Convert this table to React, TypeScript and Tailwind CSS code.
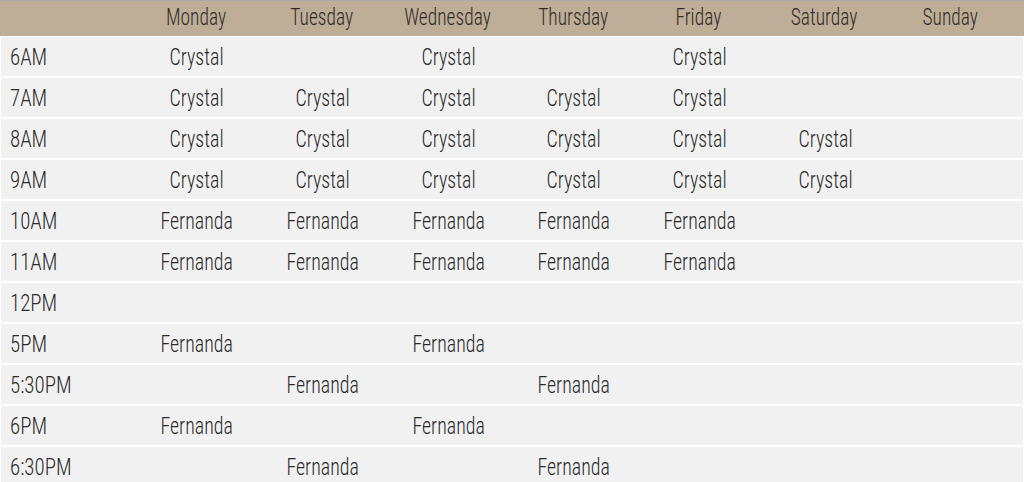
const DAYS = ["Monday", "Tuesday", "Wednesday", "Thursday", "Friday", "Saturday", "Sunday"];

// one entry per weekday, "" where nobody is scheduled
const SCHEDULE: { time: string; slots: string[] }[] = [
  { time: "6AM", slots: ["Crystal", "", "Crystal", "", "Crystal", "", ""] },
  { time: "7AM", slots: ["Crystal", "Crystal", "Crystal", "Crystal", "Crystal", "", ""] },
  { time: "8AM", slots: ["Crystal", "Crystal", "Crystal", "Crystal", "Crystal", "Crystal", ""] },
  { time: "9AM", slots: ["Crystal", "Crystal", "Crystal", "Crystal", "Crystal", "Crystal", ""] },
  { time: "10AM", slots: ["Fernanda", "Fernanda", "Fernanda", "Fernanda", "Fernanda", "", ""] },
  { time: "11AM", slots: ["Fernanda", "Fernanda", "Fernanda", "Fernanda", "Fernanda", "", ""] },
  { time: "12PM", slots: ["", "", "", "", "", "", ""] },
  { time: "5PM", slots: ["Fernanda", "", "Fernanda", "", "", "", ""] },
  { time: "5:30PM", slots: ["", "Fernanda", "", "Fernanda", "", "", ""] },
  { time: "6PM", slots: ["Fernanda", "", "Fernanda", "", "", "", ""] },
  { time: "6:30PM", slots: ["", "Fernanda", "", "Fernanda", "", "", ""] },
];

const cols = "grid grid-cols-[133px_repeat(7,125.7px)_1fr]";

const App = () => {
  return (
    <div
      className="w-[1024px] h-[482px] overflow-hidden bg-white border-t border-[#a9a9a9] text-[24px] font-light leading-none"
      style={{ fontFamily: '"Roboto Condensed", "DejaVu Sans Condensed", sans-serif' }}
    >
      {/* header */}
      <div className={`${cols} h-[35px] pb-[3px] items-center bg-[#bfae97] text-[#2f2c28]`}>
        <div />
        {DAYS.map((day) => (
          <div key={day} className="text-center">
            <span className="inline-block scale-x-[0.81]">{day}</span>
          </div>
        ))}
        <div />
      </div>

      {/* rows */}
      <div className="flex flex-col gap-[2px] mt-px px-px">
        {SCHEDULE.map((row) => (
          <div key={row.time} className={`${cols} h-[39px] shrink-0 items-center bg-[#f1f1f1] text-[#2b2b2b]`}>
            <div className="pl-[9px]">
              <span className="inline-block origin-left scale-x-[0.87]">{row.time}</span>
            </div>
            {row.slots.map((name, i) => (
              <div key={i} className="text-center">
                <span className="inline-block scale-x-[0.83]">{name}</span>
              </div>
            ))}
            <div />
          </div>
        ))}
      </div>
    </div>
  );
};

export default App;
